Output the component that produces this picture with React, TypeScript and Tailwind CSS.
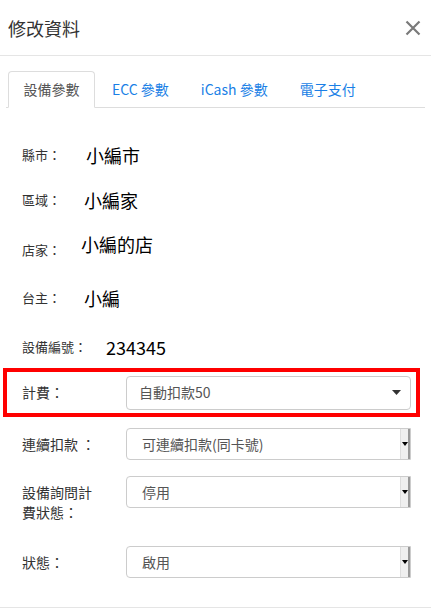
import React from 'react';

const font = { fontFamily: '"Noto Sans CJK TC", "Noto Sans", sans-serif' };

function Caret() {
  return (
    <svg width="9" height="5" viewBox="0 0 9 5" className="block">
      <path d="M0 0h9L4.5 5z" fill="#333" />
    </svg>
  );
}

function NativeSelect({ value }: { value: string }) {
  return (
    <div className="flex h-[32px] w-[285px] items-stretch rounded-l-[4px] border border-[#ccc] bg-white">
      <div className="flex flex-1 items-center pl-[15px] text-[14px] text-[#555]">{value}</div>
      <div className="flex w-[10px] items-center justify-center border-l border-[#ddd] border-r-[2px] border-r-[#999] bg-[#efefef]">
        <svg width="6" height="4" viewBox="0 0 6 4" className="block">
          <path d="M0 0h6L3 4z" fill="#000" />
        </svg>
      </div>
    </div>
  );
}

export default function App() {
  const info = [
    { label: '縣市：', value: '小編市', mt: 'mt-[27px]', gap: 'ml-[25px]', vy: '' },
    { label: '區域：', value: '小編家', mt: 'mt-[5px]', gap: 'ml-[23px]', vy: '' },
    { label: '店家：', value: '小編的店', mt: 'mt-[8px]', gap: 'ml-[20px]', vy: '-translate-y-[4px]' },
    { label: '台主：', value: '小編', mt: 'mt-[10px]', gap: 'ml-[23px]', vy: '' },
    { label: '設備編號：', value: '234345', mt: 'mt-[9px]', gap: 'ml-[19px]', vy: '' },
  ];

  return (
    <div className="h-[613px] w-[431px] overflow-hidden bg-white text-[#333]" style={font}>
      <div className="flex h-[56px] items-center justify-between border-b border-[#e5e5e5] pl-[8px] pr-[10px]">
        <h1 className="text-[18px] leading-none">修改資料</h1>
        <svg width="16" height="16" viewBox="0 0 16 16" className="block">
          <path d="M1.5 1.5l13 13M14.5 1.5l-13 13" stroke="#7a7a7a" strokeWidth="2.2" />
        </svg>
      </div>

      <div className="mx-[6px] mt-[15px] flex h-[37px] border-b border-[#ddd] text-[14px]">
        <div className="-mb-px flex h-[37px] w-[87px] items-center justify-center rounded-t-[4px] border border-[#ddd] border-b-white bg-white ml-[2px] text-[#555]">
          設備參數
        </div>
        <div className="ml-[17px] flex items-center text-[#1a7fe6]">ECC 參數</div>
        <div className="ml-[32px] flex items-center text-[#1a7fe6]">iCash 參數</div>
        <div className="ml-[32px] flex items-center text-[#1a7fe6]">電子支付</div>
      </div>

      <div className="pl-[22px]">
        {info.map((r) => (
          <div key={r.label} className={`flex h-[40px] items-center ${r.mt}`}>
            <span className={`text-[13px] text-[#333] ${r.label === '店家：' ? 'translate-y-[2px]' : ''}`}>{r.label}</span>
            <span className={`${r.gap} text-[18px] text-black ${r.vy}`}>{r.value}</span>
          </div>
        ))}
      </div>

      <div className="ml-[3px] mt-[1px] flex h-[49px] w-[417px] items-center border-[4px] border-[#ff0000] pl-[15px]">
        <span className="w-[104px] text-[14px]">計費：</span>
        <div className="flex h-[34px] w-[285px] items-center justify-between rounded-[4px] border border-[#ccc] bg-white pl-[12px] pr-[9px] text-[14px] text-[#555]">
          <span>自動扣款50</span>
          <Caret />
        </div>
      </div>

      <div className="mt-[11px] flex items-center pl-[22px]">
        <span className="w-[104px] text-[14px]">連續扣款 ：</span>
        <NativeSelect value="可連續扣款(同卡號)" />
      </div>

      <div className="mt-[16px] flex items-start pl-[22px]">
        <span className="w-[75px] text-[14px] leading-[20px] pt-[6px]">設備詢問計費狀態：</span>
        <div className="ml-[29px]">
          <NativeSelect value="停用" />
        </div>
      </div>

      <div className="mt-[24px] flex items-center pl-[22px]">
        <span className="w-[104px] text-[14px]">狀態：</span>
        <NativeSelect value="啟用" />
      </div>

      <div className="mt-[29px] border-t border-[#e5e5e5]" />
    </div>
  );
}
